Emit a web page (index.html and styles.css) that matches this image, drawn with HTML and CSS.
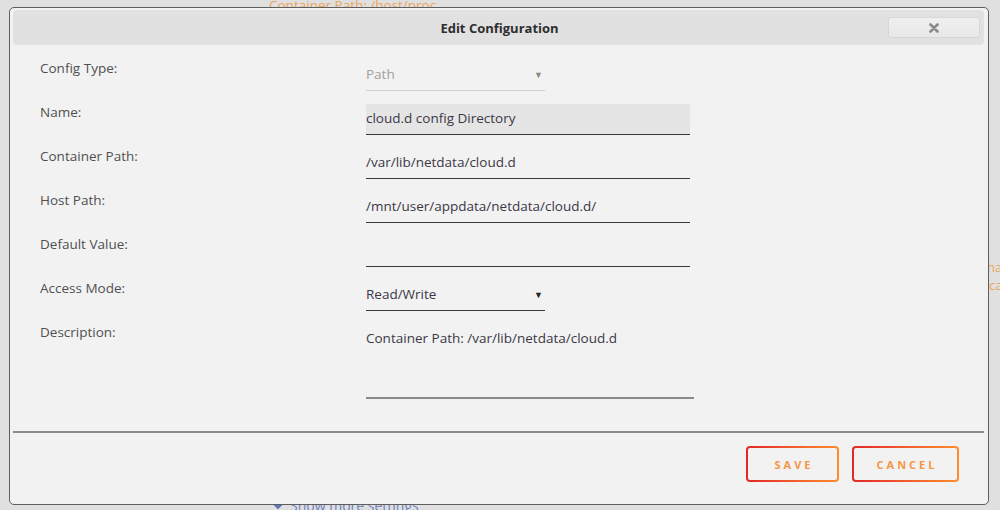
FILE: index.html
```html
<!DOCTYPE html>
<html>
<head>
<meta charset="utf-8">
<link rel="stylesheet" href="styles.css">
</head>
<body>
<div class="page">
  <div class="bg-text bg-top">Container Path: /host/proc</div>
  <div class="bg-text bg-right1">ha</div>
  <div class="bg-text bg-right2">ca</div>
  <div class="bg-more">
    <svg class="chev" width="12" height="10" viewBox="0 0 12 10"><path d="M1.5 2 L6 6.5 L10.5 2" fill="none" stroke="#5a72b8" stroke-width="2.6"/></svg>
    <span>Show more settings</span>
  </div>

  <div class="dialog">
    <div class="dlg-head">
      <span class="dlg-title">Edit Configuration</span>
      <button class="dlg-close" type="button">
        <svg width="10" height="10" viewBox="0 0 10 10"><path d="M1.5 1.5 L8.5 8.5 M8.5 1.5 L1.5 8.5" stroke="#8a8a8a" stroke-width="2.6" stroke-linecap="round"/></svg>
      </button>
    </div>
    <div class="dlg-body">
      <div class="row">
        <div class="label">Config Type:</div>
        <div class="field select disabled"><span>Path</span><span class="arrow">▼</span></div>
      </div>
      <div class="row">
        <div class="label">Name:</div>
        <div class="field input filled">cloud.d config Directory</div>
      </div>
      <div class="row">
        <div class="label">Container Path:</div>
        <div class="field input">/var/lib/netdata/cloud.d</div>
      </div>
      <div class="row">
        <div class="label">Host Path:</div>
        <div class="field input">/mnt/user/appdata/netdata/cloud.d/</div>
      </div>
      <div class="row">
        <div class="label">Default Value:</div>
        <div class="field input"></div>
      </div>
      <div class="row">
        <div class="label">Access Mode:</div>
        <div class="field select"><span>Read/Write</span><span class="arrow">▼</span></div>
      </div>
      <div class="row">
        <div class="label">Description:</div>
        <div class="field textarea">Container Path: /var/lib/netdata/cloud.d</div>
      </div>
    </div>
    <div class="dlg-sep"></div>
    <div class="dlg-foot">
      <button class="btn" type="button">SAVE</button>
      <button class="btn btn-cancel" type="button">CANCEL</button>
    </div>
  </div>
</div>
</body>
</html>
```
FILE: styles.css
```css
* { box-sizing: border-box; }
html, body { margin: 0; padding: 0; }
body {
  background: #e0e0e0;
  font-family: "Open Sans", "Noto Sans", sans-serif;
  font-size: 13.5px;
  color: #4f4f4f;
  width: 1000px;
  height: 510px;
  overflow: hidden;
}
.page { position: relative; width: 1000px; height: 510px; }

.bg-text {
  position: absolute;
  color: #eaa45c;
  font-size: 13.5px;
  line-height: 16px;
}
.bg-top { left: 269px; top: -3px; }
.bg-right1 { left: 987px; top: 259px; font-size: 13px; }
.bg-right2 { left: 989px; top: 277px; font-size: 13px; }
.bg-more {
  position: absolute;
  left: 272px;
  top: 498px;
  display: flex;
  align-items: center;
  gap: 6px;
  color: #6f82bd;
  font-size: 14px;
  line-height: 16px;
}

.dialog {
  position: absolute;
  left: 9px;
  top: 7px;
  width: 980px;
  height: 498px;
  border: 1px solid #5e5e5e;
  border-radius: 5px;
  background: #f2f2f2;
  padding: 2px 4px 0 3px;
  display: flex;
  flex-direction: column;
}
.dlg-head {
  position: relative;
  height: 35px;
  background: #e1e1e1;
  border-radius: 4px;
  display: flex;
  align-items: center;
  justify-content: center;
}
.dlg-title {
  font-weight: 700;
  color: #2e2e2e;
  font-size: 13px;
  padding-left: 2px;
}
.dlg-close {
  position: absolute;
  right: 4px;
  top: 7px;
  width: 92px;
  height: 21px;
  border: 1px solid #d6d6d6;
  border-radius: 3px;
  background: linear-gradient(#efefef, #e8e8e8);
  display: flex;
  align-items: center;
  justify-content: center;
  padding: 0;
}

.dlg-body {
  padding: 15px 0 0 27px;
  display: flex;
  flex-direction: column;
  gap: 13px;
}
.row {
  display: grid;
  grid-template-columns: 326px auto;
  align-items: start;
}
.label {
  line-height: 17px;
  color: #505050;
}
.field {
  width: 324px;
  height: 31px;
  border-bottom: 1px solid #3a3a3a;
  line-height: 29px;
  color: #3b3846;
  white-space: nowrap;
}
.field.filled { background: #e5e5e5; }
.field.select {
  width: 179px;
  display: flex;
  justify-content: space-between;
  padding-right: 2px;
}
.field.select .arrow {
  font-size: 9px;
  color: #222;
}
.field.disabled { border-bottom-color: #d0d0d0; color: #a0a0a0; }
.field.disabled .arrow { color: #8a8a8a; }
.field.textarea {
  width: 328px;
  height: 75px;
  line-height: 18px;
  padding-top: 5px;
  border-bottom: 2px solid #8a8a8a;
}

.dlg-sep {
  margin-top: 32px;
  height: 2px;
  background: #8c8c8c;
}
.dlg-foot {
  display: flex;
  justify-content: flex-end;
  gap: 13px;
  padding: 13px 25px 0 0;
}
.btn {
  position: relative;
  height: 36px;
  width: 93px;
  border: 2px solid transparent;
  border-radius: 4px;
  background:
    linear-gradient(#f2f2f2, #f2f2f2) padding-box,
    linear-gradient(90deg, #e22828, #ff8d2f) border-box;
  color: #f59645;
  font-family: "Open Sans", "Noto Sans", sans-serif;
  font-weight: 700;
  font-size: 11px;
  letter-spacing: 3px;
  padding: 0 0 0 3px;
}
.btn-cancel { width: 107px; }
```
